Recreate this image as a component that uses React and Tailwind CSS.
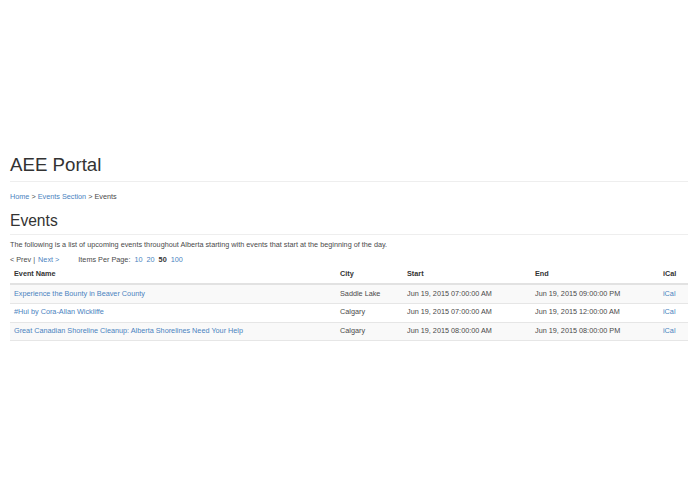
import React from "react";

const rows = [
  { name: "Experience the Bounty in Beaver County", city: "Saddle Lake", start: "Jun 19, 2015 07:00:00 AM", end: "Jun 19, 2015 09:00:00 PM" },
  { name: "#Hui by Cora-Allan Wickliffe", city: "Calgary", start: "Jun 19, 2015 07:00:00 AM", end: "Jun 19, 2015 12:00:00 AM" },
  { name: "Great Canadian Shoreline Cleanup: Alberta Shorelines Need Your Help", city: "Calgary", start: "Jun 19, 2015 08:00:00 AM", end: "Jun 19, 2015 08:00:00 PM" },
];

export default function App() {
  return (
    <div className="min-h-[494px] bg-white font-['Liberation_Sans',Arial,sans-serif] text-[#4a4a4a] text-[7.28px] leading-[10.4px] pl-[10px] pr-[7px] pt-[155px]">
      <div className="border-b border-[#eee] pb-[5px]">
        <h1 className="text-[18.7px] leading-[1.1] font-normal text-[#333]">AEE Portal</h1>
      </div>
      <p className="mt-[10px]">
        <a href="#" className="text-[#4a83c0]">Home</a> &gt;{" "}
        <a href="#" className="text-[#4a83c0]">Events Section</a> &gt; Events
      </p>
      <div className="mt-[10px] border-b border-[#eee] pb-[4.7px]">
        <h2 className="text-[15.6px] leading-[1.1] font-normal text-[#333]">Events</h2>
      </div>
      <p className="mt-[5.5px]">
        The following is a list of upcoming events throughout Alberta starting with events that start at the beginning of the day.
      </p>
      <div className="mt-[4.5px] flex items-baseline">
        <span>&lt; Prev |</span>
        <a href="#" className="ml-[3px] text-[#4a83c0]">Next &gt;</a>
        <span className="ml-[19px]">Items Per Page:</span>
        <a href="#" className="ml-[4px] text-[#4a83c0]">10</a>
        <a href="#" className="ml-[4px] text-[#4a83c0]">20</a>
        <span className="ml-[4px] font-bold text-[#333]">50</span>
        <a href="#" className="ml-[4px] text-[#4a83c0]">100</a>
      </div>
      <table className="w-[678px] table-fixed border-collapse">
        <colgroup>
          <col className="w-[326px]" />
          <col className="w-[67px]" />
          <col className="w-[128px]" />
          <col className="w-[128px]" />
          <col className="w-[29px]" />
        </colgroup>
        <thead>
          <tr className="border-b-2 border-[#e2e2e2]">
            <th className="text-left font-bold text-[#333] px-[4px] py-[3.5px]">Event Name</th>
            <th className="text-left font-bold text-[#333] px-[4px] py-[3.5px]">City</th>
            <th className="text-left font-bold text-[#333] px-[4px] py-[3.5px]">Start</th>
            <th className="text-left font-bold text-[#333] px-[4px] py-[3.5px]">End</th>
            <th className="text-left font-bold text-[#333] px-[4px] py-[3.5px]">iCal</th>
          </tr>
        </thead>
        <tbody>
          {rows.map((r, i) => (
            <tr key={i} className={`border-b border-[#e6e6e6] ${i % 2 === 0 ? "bg-[#f9f9f9]" : "bg-white"}`}>
              <td className="px-[4px] py-[3.7px]"><a href="#" className="text-[#4a83c0]">{r.name}</a></td>
              <td className="px-[4px] py-[3.7px]">{r.city}</td>
              <td className="px-[4px] py-[3.7px]">{r.start}</td>
              <td className="px-[4px] py-[3.7px]">{r.end}</td>
              <td className="px-[4px] py-[3.7px]"><a href="#" className="text-[#4a83c0]">iCal</a></td>
            </tr>
          ))}
        </tbody>
      </table>
    </div>
  );
}
